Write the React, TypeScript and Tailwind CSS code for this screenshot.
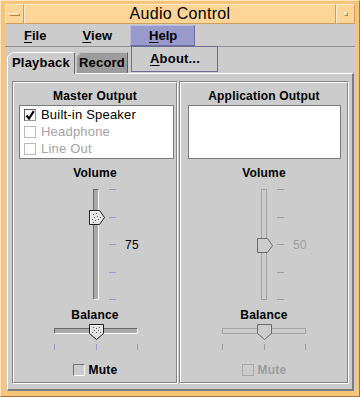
import React from "react";

function VThumb({ disabled, pos }: { disabled?: boolean; pos: string }) {
  return (
    <svg width="16" height="15" viewBox="0 0 16 15" className={"absolute left-0 " + pos}>
      <polygon
        points="0.5,0.5 10.5,0.5 15.5,7.5 10.5,14.5 0.5,14.5"
        fill={disabled ? "#cccccc" : "#e4e4e4"}
        stroke={disabled ? "#6a6a6a" : "#1e1e1e"}
      />
      {!disabled && (
        <g fill="#555">
          <polyline points="1.5,13.5 1.5,1.5 10,1.5" fill="none" stroke="#ffffff" />
          <rect x="4" y="4" width="1" height="1" />
          <rect x="7" y="3" width="1" height="1" />
          <rect x="5" y="7" width="1" height="1" />
          <rect x="8" y="6" width="1" height="1" />
          <rect x="3" y="9" width="1" height="1" />
          <rect x="6" y="10" width="1" height="1" />
          <rect x="9" y="9" width="1" height="1" />
          <rect x="4" y="12" width="1" height="1" />
          <rect x="11" y="7" width="1" height="1" />
        </g>
      )}
    </svg>
  );
}

function HThumb({ disabled }: { disabled?: boolean }) {
  return (
    <svg width="15" height="16" viewBox="0 0 15 16" className="absolute left-[35px] top-0">
      <polygon
        points="0.5,0.5 14.5,0.5 14.5,9.5 7.5,15.5 0.5,9.5"
        fill={disabled ? "#cccccc" : "#e4e4e4"}
        stroke={disabled ? "#6a6a6a" : "#1e1e1e"}
      />
      {!disabled && (
        <g fill="#555">
          <polyline points="1.5,9 1.5,1.5 13.5,1.5" fill="none" stroke="#ffffff" />
          <rect x="4" y="3" width="1" height="1" />
          <rect x="7" y="4" width="1" height="1" />
          <rect x="10" y="3" width="1" height="1" />
          <rect x="5" y="6" width="1" height="1" />
          <rect x="9" y="6" width="1" height="1" />
          <rect x="7" y="8" width="1" height="1" />
          <rect x="3" y="8" width="1" height="1" />
          <rect x="11" y="8" width="1" height="1" />
        </g>
      )}
    </svg>
  );
}

function ListItem({ label, checked, disabled }: { label: string; checked?: boolean; disabled?: boolean }) {
  return (
    <div className="h-[17px] flex items-center gap-[5px]">
      <div
        className={
          "w-[12px] h-[12px] border bg-white flex items-center justify-center " +
          (disabled ? "border-[#b9b9b9]" : "border-t-[#5a5a5a] border-l-[#5a5a5a] border-r-[#9a9a9a] border-b-[#9a9a9a]")
        }
      >
        {checked && (
          <svg width="10" height="10" viewBox="0 0 10 10">
            <path d="M1.5 5.5 L4 8.5 L8.8 1.2" fill="none" stroke="#000" strokeWidth="2.2" />
          </svg>
        )}
      </div>
      <span className={"text-[13px] leading-[15px] tracking-[0.2px] " + (disabled ? "text-[#a3a3a3]" : "text-black")}>
        {label}
      </span>
    </div>
  );
}

function Panel({
  title,
  side,
}: {
  title: string;
  side: "left" | "right";
}) {
  const dis = side === "right";
  const tick = dis ? "bg-[#9c9c9c]" : "bg-[#9a9acc]";
  return (
    <div
      className={
        "h-full border border-t-[#858585] border-l-[#858585] border-r-white border-b-white " +
        (side === "left" ? "w-[166px]" : "flex-1")
      }
    >
      <div className="h-full border border-t-white border-l-white border-r-[#858585] border-b-[#858585] flex flex-col">
        <div className="mt-[6px] h-[14px] leading-[14px] text-[12px] font-bold text-center tracking-[0.2px]">
          {title}
        </div>
        <div
          className={
            "mt-[2px] h-[54px] bg-white border border-[#7a7a7a] pl-[4px] " +
            (side === "left" ? "ml-[5px] w-[155px]" : "ml-[7px] w-[153px]")
          }
        >
          {side === "left" && (
            <>
              <ListItem label="Built-in Speaker" checked />
              <ListItem label="Headphone" disabled />
              <ListItem label="Line Out" disabled />
            </>
          )}
        </div>
        <div className="mt-[7px] h-[14px] leading-[14px] text-[12px] font-bold text-center tracking-[0.2px]">
          Volume
        </div>
        <div className={"mt-[9px] h-[111px] flex " + (side === "left" ? "ml-[75px]" : "ml-[76px]")}>
          <div className="relative w-[16px] h-full">
            <div
              className={
                "ml-[4px] w-[6px] h-full border " +
                (dis
                  ? "border-[#a2a2a2]"
                  : "bg-[#a9a9a9] border-t-[#6a6a6a] border-l-[#6a6a6a] border-r-white border-b-white")
              }
            />
            <VThumb disabled={dis} pos={dis ? "top-[49px]" : "top-[21px]"} />
          </div>
          <div className="ml-[4px] w-[7px] h-full flex flex-col justify-between">
            <div className={"h-[1px] " + tick} />
            <div className={"h-[1px] " + tick} />
            <div className={"h-[1px] " + tick} />
            <div className={"h-[1px] " + tick} />
            <div className={"h-[1px] " + tick} />
          </div>
          <div className={"ml-[9px] h-full flex items-center text-[12px] tracking-[0.3px] " + (dis ? "text-[#9c9c9c]" : "text-black")}>
            {dis ? "50" : "75"}
          </div>
        </div>
        <div className="mt-[8px] h-[14px] leading-[14px] text-[12px] font-bold text-center tracking-[0.2px]">
          Balance
        </div>
        <div className={"mt-[2px] w-[84px] flex flex-col " + (side === "left" ? "ml-[40px]" : "ml-[41px]")}>
          <div className="relative h-[16px] pt-[4px]">
            <div
              className={
                "h-[6px] w-[84px] border " +
                (dis
                  ? "border-[#a2a2a2]"
                  : "bg-[#a9a9a9] border-t-[#6a6a6a] border-l-[#6a6a6a] border-r-white border-b-white")
              }
            />
            <HThumb disabled={dis} />
          </div>
          <div className="mt-[4px] h-[6px] flex justify-between">
            <div className={"w-[1px] h-full " + tick} />
            <div className={"w-[1px] h-full " + tick} />
            <div className={"w-[1px] h-full " + tick} />
          </div>
        </div>
        <div className="mt-[13px] flex justify-center items-center gap-[4px]">
          <div
            className={
              "w-[12px] h-[12px] border " +
              (dis ? "border-[#a6a6a6]" : "border-t-[#707070] border-l-[#707070] border-r-white border-b-white")
            }
          />
          <span className={"text-[12px] leading-[14px] font-bold tracking-[0.2px] " + (dis ? "text-[#9c9c9c]" : "text-black")}>
            Mute
          </span>
        </div>
      </div>
    </div>
  );
}

export default function App() {
  return (
    <div className="w-[360px] h-[397px] flex flex-col bg-[#f7c47c] border border-t-[#ffe6bd] border-l-[#ffe6bd] border-r-[#a8743a] border-b-[#a8743a] pt-[3px] pl-[4px] pr-[4px] pb-[5px] font-['Liberation_Sans',Arial,sans-serif] text-black overflow-hidden">
      {/* title bar */}
      <div className="h-[20px] flex bg-[#fdd597]">
        <div className="w-[19px] h-full border border-t-[#ffedcf] border-l-[#ffedcf] border-r-[#d29d5a] border-b-[#d29d5a] flex items-center justify-center">
          <div className="w-[11px] h-[3px] border border-t-[#fff2dc] border-l-[#fff2dc] border-r-[#b9843f] border-b-[#b9843f]" />
        </div>
        <div className="flex-1 h-full border border-t-[#ffedcf] border-l-[#ffedcf] border-r-[#d29d5a] border-b-[#d29d5a] flex items-center justify-center text-[16px] tracking-[0.3px] leading-[18px]">
          Audio Control
        </div>
        <div className="w-[19px] h-full border border-t-[#ffedcf] border-l-[#ffedcf] border-r-[#d29d5a] border-b-[#d29d5a] flex items-center justify-center">
          <div className="w-[4px] h-[4px] border border-t-[#fff2dc] border-l-[#fff2dc] border-r-[#b9843f] border-b-[#b9843f]" />
        </div>
      </div>

      {/* menu bar */}
      <div className="relative h-[23px] bg-[#cccccc] border-b border-b-[#8f8f8f] flex items-start">
        <div className="mt-[1px] h-[21px] pl-[19px] pr-[18px] flex items-center text-[13px] font-bold">
          <span className="underline underline-offset-[2px]">F</span>ile
        </div>
        <div className="mt-[1px] h-[21px] pl-[18px] pr-[18px] flex items-center text-[13px] font-bold">
          <span className="underline underline-offset-[2px]">V</span>iew
        </div>
        <div className="mt-[1px] h-[21px] pl-[18px] pr-[17px] flex items-center text-[13px] font-bold bg-[#9999cc] border border-t-[#b8b8e0] border-l-[#b8b8e0] border-r-[#6f6f9e] border-b-[#6f6f9e]">
          <span className="underline underline-offset-[2px]">H</span>elp
        </div>
        <div className="absolute left-[126px] top-[22px] w-[87px] h-[26px] bg-[#cccccc] border border-[#6b6b96] z-20 flex items-center pl-[18px] text-[13px] font-bold tracking-[0.2px]">
          <span>
            <span className="underline underline-offset-[2px]">A</span>bout...
          </span>
        </div>
      </div>

      {/* body */}
      <div className="flex-1 bg-[#cccccc] flex flex-col pl-[2px] pr-[1px] pt-[5px]">
        <div className="h-[21px] flex items-start">
          <div className="relative z-10 w-[68px] h-[22px] flex items-center justify-center text-[13px] font-bold tracking-[0.2px]">
            <svg width="68" height="22" viewBox="0 0 68 22" className="absolute inset-0">
              <path d="M0 22 V5 L5 0 H68 V22 Z" fill="#cccccc" />
              <polyline points="0.5,22 0.5,5 5,0.5 67,0.5" fill="none" stroke="#ffffff" />
              <line x1="67.5" y1="1" x2="67.5" y2="22" stroke="#6a6a6a" />
            </svg>
            <span className="relative">Playback</span>
          </div>
          <div className="relative w-[52px] h-[21px] ml-[1px] flex items-center justify-center text-[13px] font-bold tracking-[0.2px]">
            <svg width="52" height="21" viewBox="0 0 52 21" className="absolute inset-0">
              <path d="M0 21 V5 L5 0 H52 V21 Z" fill="#9c9c9c" />
              <polyline points="0.5,21 0.5,5 5,0.5 51,0.5" fill="none" stroke="#c4c4c4" />
              <line x1="51.5" y1="1" x2="51.5" y2="21" stroke="#5e5e5e" />
            </svg>
            <span className="relative">Record</span>
          </div>
        </div>
        <div className="flex-1 flex gap-[1px] border-t border-l border-r-2 border-b-2 border-t-white border-l-white border-r-[#7c7c7c] border-b-[#7c7c7c] pt-[7px] pl-[4px] pr-[3px] pb-[5px]">
          <Panel title="Master Output" side="left" />
          <Panel title="Application Output" side="right" />
        </div>
      </div>
    </div>
  );
}
